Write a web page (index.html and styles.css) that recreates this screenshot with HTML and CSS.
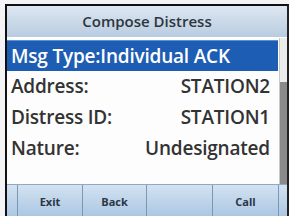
FILE: index.html
```html
<!DOCTYPE html>
<html lang="en">
<head>
  <meta charset="UTF-8" />
  <title>Compose Distress</title>
  <link rel="stylesheet" href="styles.css">
</head>
<body>

<div class="screen">
  <div class="screen--title">Compose Distress</div>
  <div class="screen--body">
    <div class="menu">
      <div class="menu--row selected">Msg Type:Individual ACK</div>
      <div class="menu--row"><span>Address:</span><span>STATION2</span></div>
      <div class="menu--row"><span>Distress ID:</span><span>STATION1</span></div>
      <div class="menu--row"><span>Nature:</span><span>Undesignated</span></div>
    </div>
    <div class="scroll"><div class="scroll--thumb"></div></div>
  </div>
  <div class="softkeys">
    <div class="softkey">Exit</div>
    <div class="softkey">Back</div>
    <div class="softkey"></div>
    <div class="softkey">Call</div>
  </div>
</div>

</body>
</html>
```

FILE: styles.css
```css
body {
  margin: 0;
  background-color: #f4f4f4;
  font-family: "Open Sans", "Noto Sans", sans-serif;
}

.screen {
  margin: 4px 0 0 5px;
  height: 212px;
  border-top: 2px solid #111;
  border-left: 2px solid #111;
  border-right: 2px solid #222;
  background-color: #fdfdfd;
  display: flex;
  flex-direction: column;
}

.screen--title {
  height: 31px;
  line-height: 31px;
  text-align: center;
  font-size: 15px;
  font-weight: 600;
  color: #2e3540;
  background: linear-gradient(#dde7f1, #b8cce0);
  border-bottom: 1px solid #fff;
}

.screen--body {
  flex: 1;
  display: flex;
  padding-top: 2px;
}

.menu {
  flex: 1;
}

.menu--row {
  height: 31px;
  line-height: 31px;
  padding: 0 8px 0 4px;
  font-size: 19px;
  font-weight: 600;
  letter-spacing: -0.2px;
  color: #333;
  display: flex;
  justify-content: space-between;
}

.menu--row.selected {
  background-color: #1e5db4;
  color: #fff;
  border-top: 1px solid #5c8fd6;
  height: 30px;
  line-height: 30px;
}

.scroll {
  width: 7px;
  margin-left: 1px;
  margin-top: -2px;
  background-color: #ececec;
  border-left: 1px solid #c8c8c8;
  display: flex;
  flex-direction: column;
  justify-content: flex-end;
}

.scroll--thumb {
  height: 102px;
  background-color: #8a8a8a;
}

.softkeys {
  height: 33px;
  display: grid;
  grid-template-columns: 65px 64px 66px 67px;
  padding-left: 10px;
  background: linear-gradient(#d3e2f1, #a9c5e2);
  border-top: 1px solid #8ea9c6;
}

.softkey {
  border-left: 1px solid #7b97b6;
  text-align: center;
  line-height: 33px;
  font-size: 11px;
  font-weight: bold;
  color: #2a3645;
}

.softkey:last-child {
  border-right: 1px solid #7b97b6;
}
```
